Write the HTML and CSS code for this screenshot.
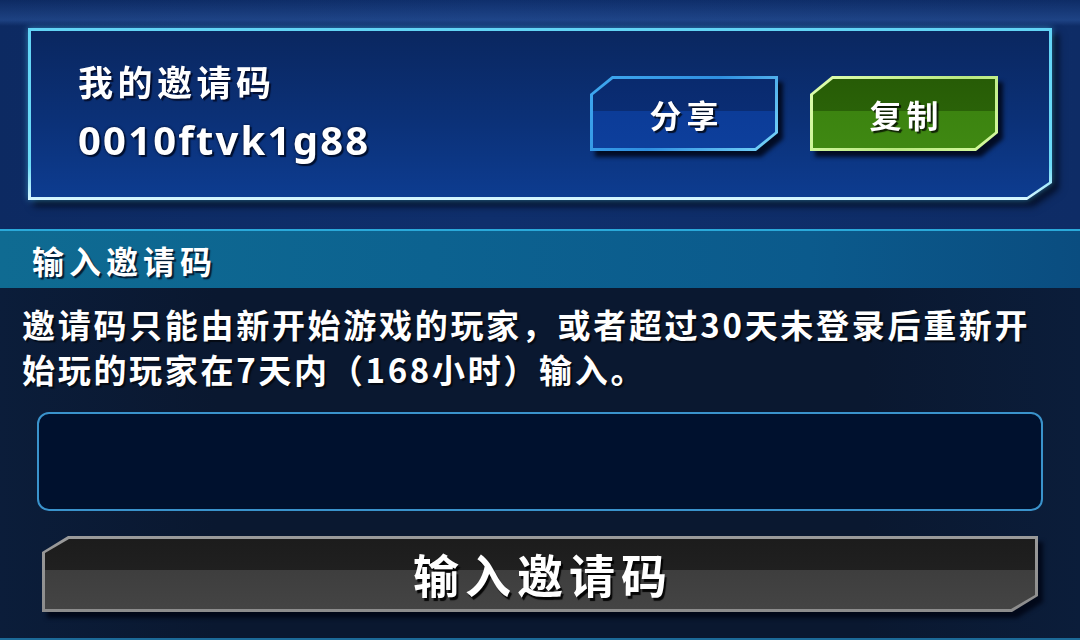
FILE: index.html
```html
<!DOCTYPE html>
<html lang="zh-CN">
<head>
  <meta charset="UTF-8" />
  <meta name="viewport" content="width=device-width, initial-scale=1.0">
  <title>邀请码</title>
  <link rel="stylesheet" href="styles.css">
</head>
<body>
  <div class="screen">
    <section class="top">
      <div class="card">
        <div class="card-edge">
          <div class="card-body">
            <div class="my-code">
              <h2 class="my-code-title">我的邀请码</h2>
              <div class="my-code-value">0010ftvk1g88</div>
            </div>
            <div class="actions">
              <div class="btn btn-blue">
                <div class="btn-edge"><div class="btn-face">分享</div></div>
              </div>
              <div class="btn btn-green">
                <div class="btn-edge"><div class="btn-face">复制</div></div>
              </div>
            </div>
          </div>
        </div>
      </div>
    </section>

    <div class="section-head">输入邀请码</div>

    <section class="enter">
      <p class="notice">邀请码只能由新开始游戏的玩家，或者超过30天未登录后重新开<br>始玩的玩家在7天内（168小时）输入。</p>

      <input class="code-input" type="text" aria-label="邀请码">

      <div class="btn btn-big">
        <div class="btn-edge"><div class="btn-face">输入邀请码</div></div>
      </div>
    </section>
  </div>
</body>
</html>
```

FILE: styles.css
```css
* {
  margin: 0;
  padding: 0;
  box-sizing: border-box;
}

body {
  width: 1080px;
  height: 640px;
  overflow: hidden;
  background: #0a1830;
  font-family: "Noto Sans CJK SC", "Noto Sans", sans-serif;
  color: #fff;
}

.screen {
  height: 640px;
  display: flex;
  flex-direction: column;
}

/* 上部：自分の招待コード */
.top {
  height: 229px;
  padding: 28px 28px 0;
  background:
    linear-gradient(180deg, rgba(60, 110, 190, 0) 0px, rgba(60, 110, 190, .35) 20px, rgba(60, 110, 190, 0) 26px),
    linear-gradient(90deg, #0d2a62 0%, #0f2f6c 45%, #0e2c66 100%);
}

.card {
  height: 172px;
  filter: drop-shadow(0 0 3px rgba(80, 200, 250, .55)) drop-shadow(6px 6px 3px rgba(0, 8, 25, .8));
}

.card-edge {
  height: 100%;
  padding: 3px;
  background: linear-gradient(180deg, #62d4f6 0%, #6cdcf8 80%, #d8f6ff 100%);
  clip-path: polygon(0 0, 100% 0, 100% calc(100% - 17px), calc(100% - 25px) 100%, 0 100%);
}

.card-body {
  height: 100%;
  display: flex;
  align-items: center;
  justify-content: space-between;
  padding: 0 51px 0 47px;
  background: linear-gradient(180deg, #0a2760 0%, #0b3178 55%, #0d3c90 100%);
  clip-path: polygon(0 0, 100% 0, 100% calc(100% - 15px), calc(100% - 22px) 100%, 0 100%);
}

.my-code {
  margin-top: -8px;
}

.my-code-title {
  font-size: 35px;
  font-weight: 700;
  letter-spacing: 4.5px;
  line-height: 48px;
  text-shadow: 2px 2px 1px rgba(0, 0, 20, .7);
}

.my-code-value {
  margin-top: 12px;
  font-family: "Noto Sans", "Open Sans", sans-serif;
  font-size: 40px;
  font-weight: 700;
  letter-spacing: 2.2px;
  line-height: 46px;
  text-shadow: 0 0 3px #001030, 2px 2px 1px #001030;
}

.actions {
  display: flex;
  gap: 32px;
  margin-top: -1px;
}

/* 面取りボタン共通 */
.btn {
  width: 188px;
  height: 75px;
  filter: drop-shadow(5px 6px 2px rgba(0, 5, 20, .85));
}

.btn-edge {
  height: 100%;
  padding: 3px;
  clip-path: polygon(22px 0, 100% 0, 100% calc(100% - 18px), calc(100% - 22px) 100%, 0 100%, 0 18px);
}

.btn-face {
  height: 100%;
  display: flex;
  align-items: center;
  justify-content: center;
  font-size: 32px;
  font-weight: 700;
  letter-spacing: 5px;
  padding-left: 5px;
  text-shadow: 2px 2px 1px rgba(0, 0, 0, .75);
  clip-path: polygon(20px 0, 100% 0, 100% calc(100% - 16px), calc(100% - 20px) 100%, 0 100%, 0 16px);
}

.btn-blue .btn-edge {
  background: linear-gradient(135deg, #3fa9f0 0%, #2f8fe0 50%, #7ad8fa 100%);
}

.btn-blue .btn-face {
  background: linear-gradient(180deg, #092a6e 0%, #0a2d74 47%, #0c3c98 47%, #0d3f9c 100%);
}

.btn-green .btn-edge {
  background: linear-gradient(135deg, #e0ffb0 0%, #b8e880 60%, #d6fca0 100%);
}

.btn-green .btn-face {
  background: linear-gradient(180deg, #275c06 0%, #2a6208 47%, #3c8410 47%, #3f8812 100%);
}

/* 見出し帯 */
.section-head {
  height: 59px;
  padding-left: 32px;
  display: flex;
  align-items: center;
  border-top: 2px solid #2aa9da;
  background: linear-gradient(90deg, #0f6b92 0%, #0c6290 40%, #0b5a8c 75%, #0a4d80 100%);
  font-size: 32px;
  font-weight: 700;
  letter-spacing: 5px;
  text-shadow: 2px 2px 1px rgba(0, 10, 30, .8);
}

/* 入力エリア */
.enter {
  flex: 1;
  display: flex;
  flex-direction: column;
  padding: 14px 37px 0;
  border-bottom: 2px solid #1c6a98;
  background: linear-gradient(90deg, #0b1d3a 0%, #0a1830 20%, #0a1830 80%, #0b1d3a 100%);
}

.notice {
  margin: 0 -15px;
  font-size: 33px;
  font-weight: 700;
  letter-spacing: 2.7px;
  line-height: 45px;
  text-shadow: 2px 2px 1px rgba(0, 0, 0, .6);
}

.code-input {
  margin-top: 20px;
  height: 99px;
  width: 100%;
  border: 2px solid #3a93cc;
  border-radius: 12px;
  background: #00112e;
  color: #fff;
  font: inherit;
  font-size: 30px;
  padding: 0 20px;
  outline: none;
}

.btn-big {
  width: 996px;
  height: 76px;
  margin: 25px 0 0 5px;
}

.btn-big .btn-edge {
  background: linear-gradient(180deg, #9a9a9a 0%, #8c8c8c 100%);
  clip-path: polygon(26px 0, 100% 0, 100% calc(100% - 16px), calc(100% - 26px) 100%, 0 100%, 0 16px);
}

.btn-big .btn-face {
  font-size: 46px;
  letter-spacing: 6px;
  padding: 0 0 2px 6px;
  background: linear-gradient(180deg, #1c1c1c 0%, #202020 45%, #3e3e3e 45%, #444 100%);
  clip-path: polygon(24px 0, 100% 0, 100% calc(100% - 14px), calc(100% - 24px) 100%, 0 100%, 0 14px);
  text-shadow: 2px 3px 1px rgba(0, 0, 0, .9);
}
```
